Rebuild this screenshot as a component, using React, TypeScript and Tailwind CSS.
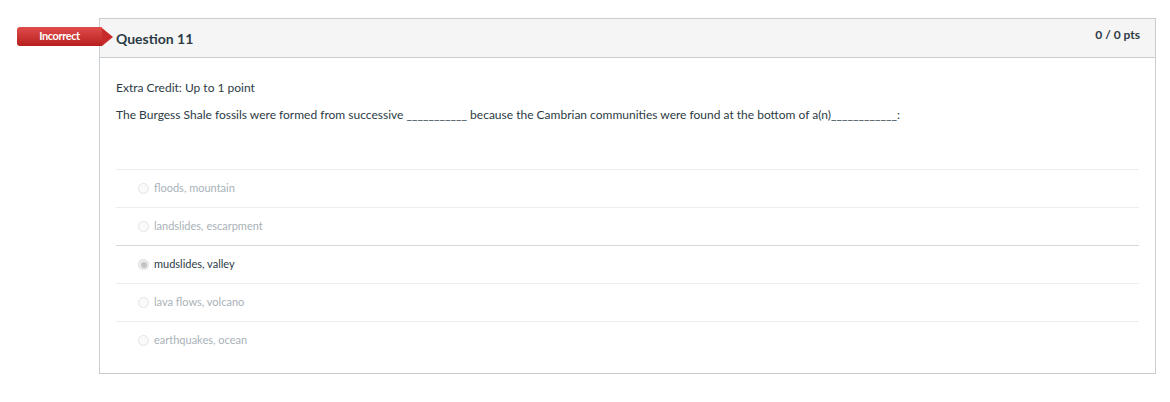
import React from "react";

const answers = [
  { text: "floods, mountain", selected: false },
  { text: "landslides, escarpment", selected: false },
  { text: "mudslides, valley", selected: true },
  { text: "lava flows, volcano", selected: false },
  { text: "earthquakes, ocean", selected: false },
];

export default function App() {
  return (
    <div
      className="w-[1170px] h-[402px] bg-white pt-[18px] pl-[99px]"
      style={{ fontFamily: "Lato, 'Open Sans', sans-serif" }}
    >
      <div className="relative w-[1057px] h-[356px] border border-[#c7cdd1] flex flex-col">
        <div className="absolute left-[-83px] top-[8px] flex items-center">
          <div className="w-[85px] h-[19px] rounded-l-[3px] bg-gradient-to-b from-[#e04b4b] to-[#b71d1d] flex items-center justify-center text-white text-[11px] font-bold tracking-[-0.4px]">
            Incorrect
          </div>
          <div className="w-0 h-0 border-y-[9.5px] border-y-transparent border-l-[11px] border-l-[#c62a2a]" />
        </div>
        <div className="h-[39px] bg-[#f5f5f5] border-b border-[#c7cdd1] flex justify-between pl-[16px] pr-[15px]">
          <div className="pt-[9px] text-[14px] font-bold text-[#2d3b45]">Question 11</div>
          <div className="pt-[7px] text-[12px] font-bold text-[#2d3b45]">0 / 0 pts</div>
        </div>
        <div className="flex-1 px-[16px] pt-[21px]">
          <div className="text-[12px] leading-[18px] text-[#2d3b45]">Extra Credit: Up to 1 point</div>
          <div className="mt-[9px] text-[12px] leading-[18px] text-[#2d3b45]">
            The Burgess Shale fossils were formed from successive ___________ because the Cambrian communities were found at the bottom of a(n)____________:
          </div>
          <div className="mt-[45px]">
            {answers.map((a, i) => (
              <div
                key={i}
                className={`h-[38px] flex items-center pl-[22px] border-t ${
                  i === 2 ? "border-[#d5d9dc]" : "border-[#ebeef0]"
                }`}
              >
                {a.selected ? (
                  <div className="w-[11px] h-[11px] rounded-full border border-[#dcdcdc] bg-[#eeeeee] flex items-center justify-center">
                    <div className="w-[6px] h-[6px] rounded-full bg-[#c4c4c4]" />
                  </div>
                ) : (
                  <div className="w-[11px] h-[11px] rounded-full border border-[#e4e4e4] bg-[#fafafa]" />
                )}
                <span
                  className={`ml-[5px] text-[11px] ${
                    a.selected ? "text-[#2d3b45]" : "text-[#a9b2b8]"
                  }`}
                >
                  {a.text}
                </span>
              </div>
            ))}
          </div>
        </div>
      </div>
    </div>
  );
}
